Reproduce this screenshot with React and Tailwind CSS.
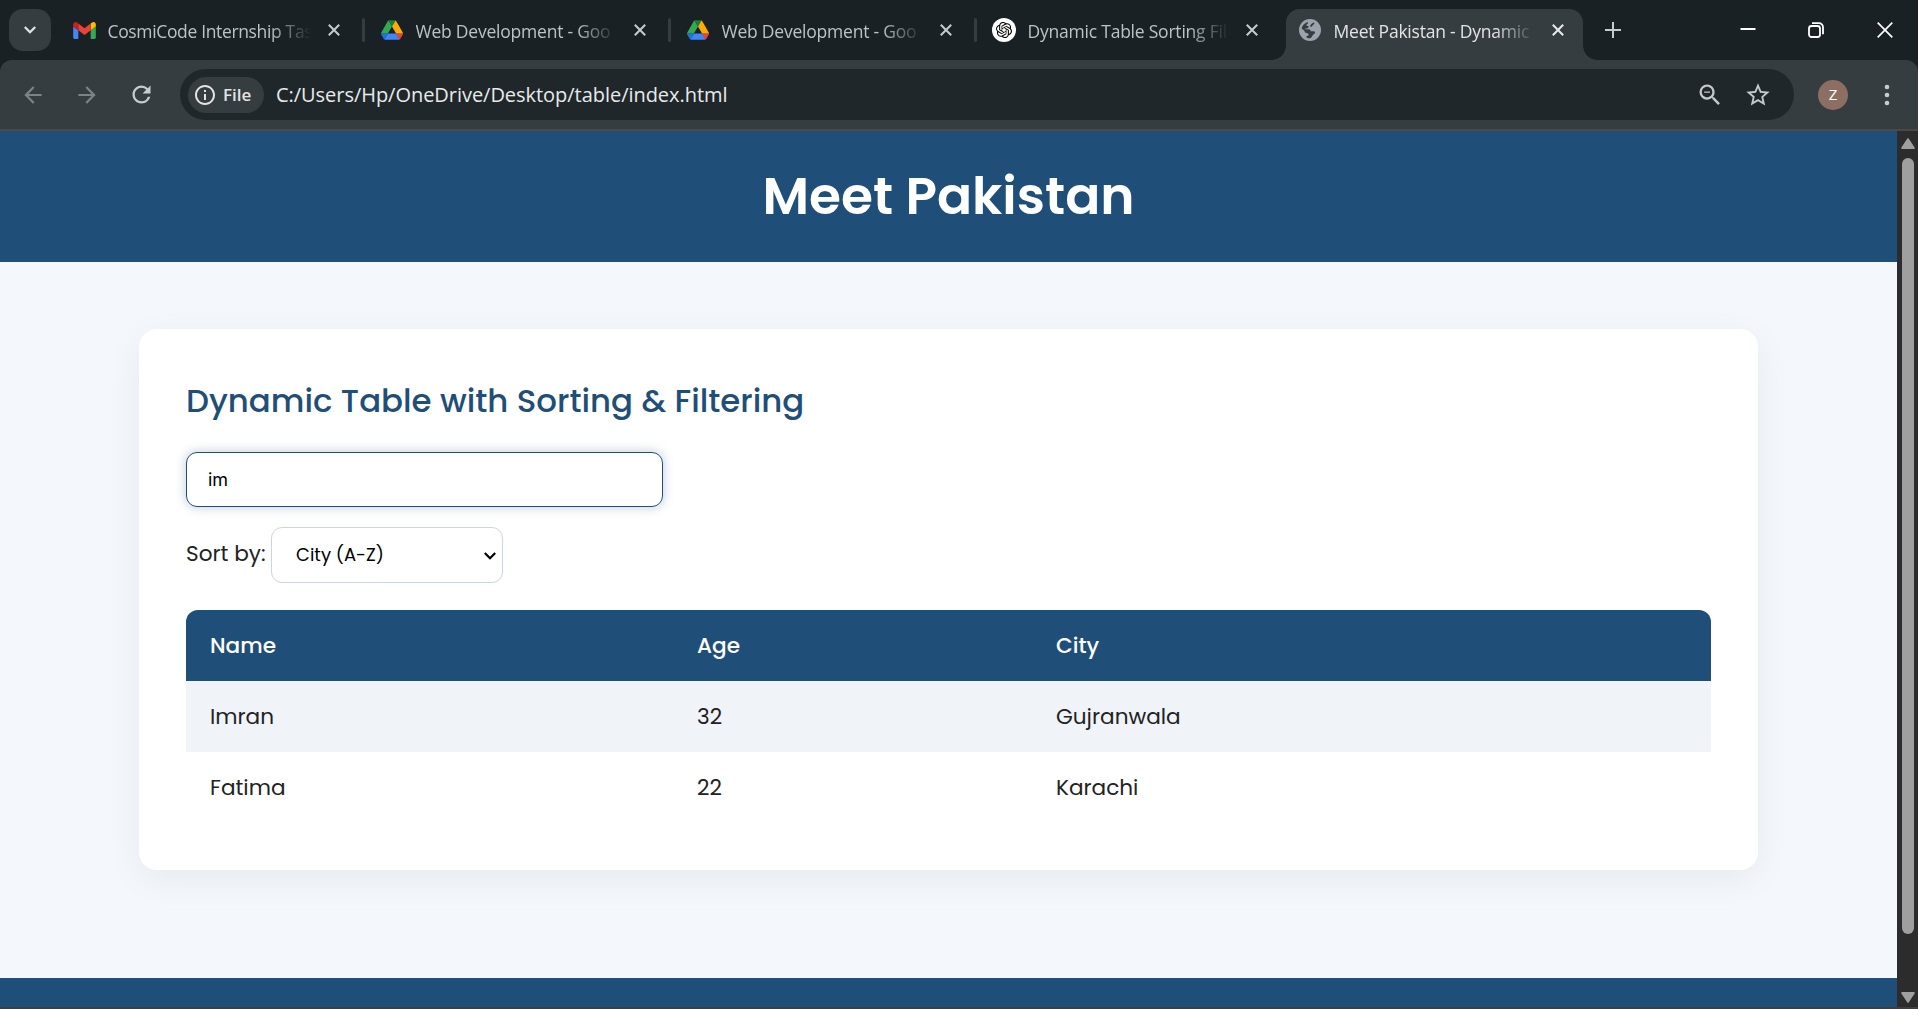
import { MdArrowBack, MdArrowForward, MdRefresh, MdInfoOutline, MdZoomOut, MdStarBorder } from "react-icons/md";
import { SiOpenai } from "react-icons/si";

function GmailIcon() {
  return (
    <svg viewBox="52 42 88 66" className="h-[17px] w-[23px]">
      <path fill="#4285f4" d="M58 108h14V74L52 59v43c0 3.32 2.69 6 6 6" />
      <path fill="#34a853" d="M120 108h14c3.32 0 6-2.69 6-6V59l-20 15" />
      <path fill="#fbbc04" d="M120 48v26l20-15v-8c0-7.42-8.47-11.65-14.4-7.2" />
      <path fill="#ea4335" d="M72 74V48l24 18 24-18v26L96 92" />
      <path fill="#c5221f" d="M52 51v8l20 15V48l-5.6-4.2c-5.94-4.45-14.4-.22-14.4 7.2" />
    </svg>
  );
}

function DriveIcon() {
  return (
    <svg viewBox="0 0 87.3 78" className="h-5 w-[22px]">
      <path fill="#1a73e8" d="m6.6 66.85 3.85 6.65c.8 1.4 1.95 2.5 3.3 3.3l13.75-23.8h-27.5c0 1.55.4 3.1 1.2 4.5z" />
      <path fill="#34a853" d="m43.65 25-13.75-23.8c-1.35.8-2.5 1.9-3.3 3.3l-25.4 44a9.06 9.06 0 0 0 -1.2 4.5h27.5z" />
      <path fill="#ea4335" d="m73.55 76.8c1.35-.8 2.5-1.9 3.3-3.3l1.6-2.75 7.65-13.25c.8-1.4 1.2-2.95 1.2-4.5h-27.502l5.852 11.5z" />
      <path fill="#188038" d="m43.65 25 13.75-23.8c-1.35-.8-2.9-1.2-4.5-1.2h-18.5c-1.6 0-3.15.45-4.5 1.2z" />
      <path fill="#4285f4" d="m59.8 53h-32.3l-13.75 23.8c1.35.8 2.9 1.2 4.5 1.2h50.8c1.6 0 3.15-.45 4.5-1.2z" />
      <path fill="#fbab05" d="m73.4 26.5-12.7-22c-.8-1.4-1.95-2.5-3.3-3.3l-13.75 23.8 16.15 28h27.45c0-1.55-.4-3.1-1.2-4.5z" />
    </svg>
  );
}

function ChatIcon() {
  return (
    <span className="flex size-6 items-center justify-center rounded-full bg-white">
      <SiOpenai className="size-4 text-black" />
    </span>
  );
}

function GlobeIcon() {
  return (
    <svg viewBox="0 0 22 22" className="size-[22px]">
      <circle cx="11" cy="11" r="11" fill="#9da3aa" />
      <path fill="#363d40" d="M2.6 9.6C3.2 6.200 5.600 3.700 8.800 2.900L9.200 4.200C7.600 4.800 7.200 5.800 7.600 6.800L9.700 7.300C9.800 8.800 8.600 9.600 6.800 9.400L5.600 10.300H9.900C11 10.300 11.600 11.300 11.800 12.200H15.400C16.500 13.400 16.100 14.900 14.600 15.300L13.200 16.900C12.600 18.500 11.400 19.400 9.900 19.300C8.900 19.200 8.200 18.900 7.500 18.500V17.200L9.600 16.200C10 14.800 9 14 7.600 13.900C6.200 13.700 5.600 12.700 5.400 11.700Z" />
      <path fill="#363d40" d="M14.200 3.400L15.600 4.100C14.800 5.900 13.200 6.500 12.400 8.100L11.100 7.300C11.400 5.500 12.600 4.900 14.200 3.400Z" />
    </svg>
  );
}

function Cross({ className }) {
  return (
    <svg viewBox="0 0 12 12" className={className} fill="none" stroke="currentColor" strokeWidth="2">
      <path d="M.8.8l10.400 10.400M11.200.8L.8 11.200" />
    </svg>
  );
}

const TABS = [
  { title: "CosmiCode Internship Tas", icon: <GmailIcon />, first: true },
  { title: "Web Development - Goo", icon: <DriveIcon /> },
  { title: "Web Development - Goo", icon: <DriveIcon /> },
  { title: "Dynamic Table Sorting Fil", icon: <ChatIcon />, last: true },
  { title: "Meet Pakistan - Dynamic", icon: <GlobeIcon />, active: true },
];

function Tab({ tab }) {
  return (
    <div
      className={
        "relative flex shrink-0 items-center " +
        (tab.active ? "h-[51px] w-[297px] rounded-t-[14px] bg-[#363d40] pb-[9px] pl-3" : "h-[51px] w-[306px] pb-[9px] pl-4") +
        (tab.first ? " -ml-0.5 w-[308px]" : "") +
        (tab.last ? " mr-1" : "")
      }
    >
      {tab.active && (
        <>
          <span className="absolute bottom-0 -left-[14px] size-[14px] bg-[radial-gradient(circle_at_0_0,transparent_13.5px,#363d40_14px)]" />
          <span className="absolute -right-[14px] bottom-0 size-[14px] bg-[radial-gradient(circle_at_100%_0,transparent_13.5px,#363d40_14px)]" />
        </>
      )}
      <span className="flex w-6 shrink-0 items-center justify-center">{tab.icon}</span>
      <span
        className={
          "ml-[11.500px] w-[201px] overflow-hidden pt-px text-[17.500px] leading-6 whitespace-nowrap [mask-image:linear-gradient(to_right,#000_80%,transparent_100%)] " +
          (tab.active ? "text-[#e3e3e3]" : "text-[#bcc2c5]") +
          (tab.first ? " w-[203px] tracking-[-0.350px]" : " tracking-[-0.220px]")
        }
      >
        {tab.title}
      </span>
      <Cross className={"ml-[17.500px] size-3 " + (tab.active ? "text-[#e8eaea]" : "text-[#c7cccf]")} />
      {!tab.active && !tab.last && <span className="absolute -right-px top-[9px] h-6 w-[3px] rounded-full bg-[#363d40]" />}
    </div>
  );
}

function TabStrip() {
  return (
    <div className="flex h-[60px] shrink-0 items-start bg-[#1a2124] pt-[9px] pl-[9px] text-white">
      <button className="flex h-[42px] w-[42px] shrink-0 items-center justify-center rounded-[14px] bg-[#363d40]">
        <svg viewBox="0 0 12 8" className="h-2 w-3" fill="none" stroke="#e3e3e3" strokeWidth="2.300">
          <path d="M.8 1l5.200 5.200L11.200 1" />
        </svg>
      </button>
      <div className="ml-[7px] flex">
        {TABS.map((tab, i) => (
          <Tab key={i} tab={tab} />
        ))}
      </div>
      <svg viewBox="0 0 16 16" className="mt-[13px] ml-[22px] size-4" stroke="#c7cccf" strokeWidth="2">
        <path d="M8 0v16M0 8h16" />
      </svg>
      <div className="mr-[25px] ml-auto flex h-[42px] items-center gap-[53px]">
        <svg viewBox="0 0 16 16" className="-mr-px size-4" stroke="#fff" strokeWidth="2">
          <path d="M0.500 7h15" />
        </svg>
        <svg viewBox="0 0 16 16" className="size-4" fill="none" stroke="#fff" strokeWidth="1.800">
          <rect x="1" y="4" width="11" height="11" rx="2.500" />
          <path d="M4 1.200h7a4 4 0 0 1 4 4v7" />
        </svg>
        <svg viewBox="0 0 16 16" className="size-4" stroke="#fff" strokeWidth="1.700">
          <path d="M.7.700l14.600 14.600M15.300.7L.7 15.300" />
        </svg>
      </div>
    </div>
  );
}

function Toolbar() {
  return (
    <div className="shrink-0 bg-[#1a2124]">
      <div className="flex h-[71px] items-center rounded-t-[12px] border-b-2 border-[#4a4948] bg-[#363d40]">
        <div className="flex w-[180px] shrink-0 items-center pl-5">
          <MdArrowBack className="size-[26px] text-[#7c8285]" />
          <MdArrowForward className="ml-[28px] size-[26px] text-[#7c8285]" />
          <MdRefresh className="ml-7 size-[27px] text-[#c7cccf]" />
        </div>
        <div className="flex h-[51px] w-[1614px] shrink-0 items-center rounded-full bg-[#20272a] pl-2">
          <div className="flex h-9 w-[76px] items-center rounded-full bg-[#363d40] pl-[5px] text-[#e3e3e3]">
            <MdInfoOutline className="size-6" />
            <span className="ml-1.5 text-[17px] font-semibold">File</span>
          </div>
          <span className="ml-3 text-[20px] leading-7 tracking-[-0.040px] text-[#e8eaea]">
            C:/Users/Hp/OneDrive/Desktop/table/index.html
          </span>
          <MdZoomOut className="ml-auto size-7 text-[#c7c8c9]" />
          <MdStarBorder className="mr-[22px] ml-5 size-7 text-[#c7c8c9]" />
        </div>
        <span className="ml-6 flex size-[30px] items-center justify-center rounded-full bg-[#8d6e63] text-[15px] text-white">
          Z
        </span>
        <svg viewBox="0 0 6 22" className="ml-[36px] h-[22px] w-1.5" fill="#c7cccf">
          <circle cx="3" cy="3" r="2.300" />
          <circle cx="3" cy="11" r="2.300" />
          <circle cx="3" cy="19" r="2.300" />
        </svg>
      </div>
    </div>
  );
}

const PEOPLE = [
  { name: "Imran", age: 32, city: "Gujranwala" },
  { name: "Fatima", age: 22, city: "Karachi" },
];

function PeopleTable() {
  return (
    <table className="w-full table-fixed border-separate border-spacing-0 overflow-hidden rounded-xl text-left text-[21.600px]">
      <colgroup>
        <col className="w-[487px]" />
        <col className="w-[359px]" />
        <col />
      </colgroup>
      <thead className="bg-[#1f4e79] text-white">
        <tr className="h-[71px]">
          <th className="p-0 pt-0.5 pl-6 font-medium">Name</th>
          <th className="p-0 pt-0.5 pl-6 font-medium">Age</th>
          <th className="p-0 pt-0.5 pl-6 font-medium">City</th>
        </tr>
      </thead>
      <tbody>
        {PEOPLE.map((p) => (
          <tr key={p.name} className="h-[71px] odd:bg-[#f0f4f9]">
            <td className="p-0 pt-0.5 pl-6">{p.name}</td>
            <td className="p-0 pt-0.5 pl-6">{p.age}</td>
            <td className="p-0 pt-0.5 pl-6">{p.city}</td>
          </tr>
        ))}
      </tbody>
    </table>
  );
}

function Page() {
  return (
    <div className="flex min-w-0 flex-1 flex-col overflow-hidden bg-[#f4f7fc] font-[Poppins,Inter,sans-serif] text-[#222]">
      <header className="flex h-[131px] shrink-0 items-center justify-center bg-[#1f4e79]">
        <h1 className="text-[51.840px] leading-none font-semibold text-white">Meet Pakistan</h1>
      </header>
      <main className="mx-[139px] mt-[67px] h-[541px] shrink-0 rounded-[18px] bg-white px-[47px] pt-[47px] shadow-[0_9px_36px_rgba(0,0,0,0.060)]">
        <h2 className="text-[32.400px] leading-[49px] font-medium text-[#1f4e79]">Dynamic Table with Sorting &amp; Filtering</h2>
        <div className="mt-[27px] flex h-[55px] w-[477px] items-center rounded-[11px] border border-[#1f4e79] pb-px pl-[21px] font-[Inter,sans-serif] text-[18px] text-black shadow-[0_0_11px_rgba(31,78,121,0.300)]">
          im
        </div>
        <div className="mt-5 flex h-[56px] items-center">
          <label className="w-[85px] pb-0.5 text-[21.600px] whitespace-nowrap">Sort by:</label>
          <div className="flex h-full w-[232px] items-center justify-between rounded-[11px] border border-[#ccd6e3] pr-1.5 pb-px pl-6 text-[18px] text-black">
            City (A-Z)
            <svg viewBox="0 0 12 8" className="mt-0.5 h-2 w-3" fill="none" stroke="#000" strokeWidth="2.200">
              <path d="M.8 1l5.200 5.200L11.200 1" />
            </svg>
          </div>
        </div>
        <div className="mt-[27px]">
          <PeopleTable />
        </div>
      </main>
      <footer className="mt-[108px] h-[40px] shrink-0 bg-[#1f4e79]" />
    </div>
  );
}

function Scrollbar() {
  return (
    <div className="flex w-[21px] shrink-0 flex-col items-center bg-[#2c2c2c] pt-[7px] pb-1 pl-px">
      <svg viewBox="0 0 14 11" className="h-[11px] w-3.5 shrink-0" fill="#9f9f9f" stroke="#9f9f9f" strokeWidth="2" strokeLinejoin="round">
        <path d="M7 1.200L12.800 10H1.200z" />
      </svg>
      <div className="mt-[9px] h-[776px] w-3 rounded-full bg-[#9f9f9f]" />
      <svg viewBox="0 0 14 11" className="mt-auto h-[11px] w-3.5 shrink-0" fill="#9f9f9f" stroke="#9f9f9f" strokeWidth="2" strokeLinejoin="round">
        <path d="M7 9.800L1.200 1h11.600z" />
      </svg>
    </div>
  );
}

export default function App() {
  return (
    <div className="flex h-[1009px] w-[1918px] flex-col overflow-hidden border-b-2 border-[#3f3f3f] bg-[#1a2124] font-['Open_Sans',sans-serif]">
      <TabStrip />
      <Toolbar />
      <div className="flex min-h-0 flex-1">
        <Page />
        <Scrollbar />
      </div>
    </div>
  );
}
